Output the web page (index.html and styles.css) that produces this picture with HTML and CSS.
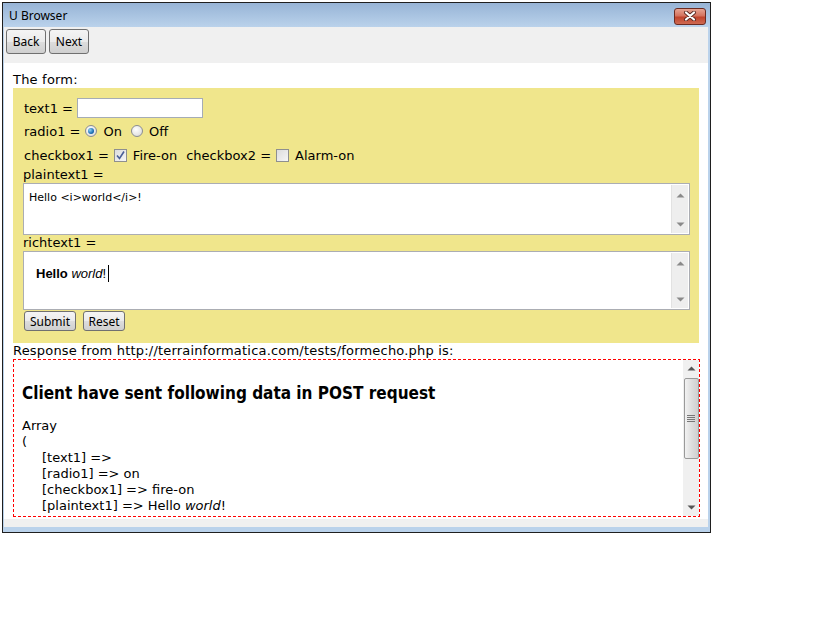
FILE: index.html
```html
<!DOCTYPE html>
<html lang="en">
<head>
<meta charset="UTF-8">
<title>U Browser</title>
<link rel="stylesheet" href="styles.css">
</head>
<body>
<div class="window">
    <div class="titlebar">
        <span class="title">U Browser</span>
        <div class="close">
            <svg width="14" height="10" viewBox="0 0 14 10">
                <path d="M3 1.5 L11 8.5 M11 1.5 L3 8.5" stroke="#5a2a24" stroke-width="4" stroke-linecap="round"/>
                <path d="M3 1.5 L11 8.5 M11 1.5 L3 8.5" stroke="#fff" stroke-width="2.2" stroke-linecap="round"/>
            </svg>
        </div>
    </div>
    <div class="client">
        <div class="toolbar">
            <button class="tool-btn">Back</button>
            <button class="tool-btn">Next</button>
        </div>
        <div class="content">
            <div class="line">The form:</div>
            <div class="form-box">
                <div class="row row-text">
                    <span>text1 =</span>
                    <span class="text-input"></span>
                </div>
                <div class="row row-radio">
                    <span>radio1 =</span>
                    <span class="radio checked"></span>
                    <span>On</span>
                    <span class="radio second"></span>
                    <span>Off</span>
                </div>
                <div class="row row-check">
                    <span>checkbox1 =</span>
                    <span class="checkbox">
                        <svg width="11" height="11" viewBox="0 0 11 11"><path d="M2 5.5 L4.5 8.5 L9 1.5" stroke="#4a5f97" stroke-width="1.6" fill="none"/></svg>
                    </span>
                    <span>Fire-on</span>
                    <span class="gap">checkbox2 =</span>
                    <span class="checkbox"></span>
                    <span>Alarm-on</span>
                </div>
                <div class="label">plaintext1 =</div>
                <div class="area plain">
                    <div class="area-text">Hello &lt;i&gt;world&lt;/i&gt;!</div>
                    <div class="mini-scroll">
                        <svg width="9" height="5" viewBox="0 0 9 5"><path d="M0.5 4.5 L4.5 0.5 L8.5 4.5 Z" fill="#8a8a8a"/></svg>
                        <svg width="9" height="5" viewBox="0 0 9 5"><path d="M0.5 0.5 L4.5 4.5 L8.5 0.5 Z" fill="#8a8a8a"/></svg>
                    </div>
                </div>
                <div class="label">richtext1 =</div>
                <div class="area rich">
                    <div class="area-text"><b>Hello</b> <i>world</i>!<span class="caret"></span></div>
                    <div class="mini-scroll">
                        <svg width="9" height="5" viewBox="0 0 9 5"><path d="M0.5 4.5 L4.5 0.5 L8.5 4.5 Z" fill="#8a8a8a"/></svg>
                        <svg width="9" height="5" viewBox="0 0 9 5"><path d="M0.5 0.5 L4.5 4.5 L8.5 0.5 Z" fill="#8a8a8a"/></svg>
                    </div>
                </div>
                <div class="form-buttons">
                    <button class="form-btn submit">Submit</button>
                    <button class="form-btn reset">Reset</button>
                </div>
            </div>
            <div class="line">Response from http://terrainformatica.com/tests/formecho.php is:</div>
            <div class="response">
                <div class="response-body">
                    <h3>Client have sent following data in POST request</h3>
                    <div class="out">Array</div>
                    <div class="out">(</div>
                    <div class="out indent">[text1] =&gt;</div>
                    <div class="out indent">[radio1] =&gt; on</div>
                    <div class="out indent">[checkbox1] =&gt; fire-on</div>
                    <div class="out indent">[plaintext1] =&gt; Hello <i>world</i>!</div>
                </div>
                <div class="scrollbar">
                    <svg class="arrow" width="9" height="5" viewBox="0 0 9 5"><path d="M0.5 4.5 L4.5 0.5 L8.5 4.5 Z" fill="#555"/></svg>
                    <div class="thumb">
                        <svg width="8" height="7" viewBox="0 0 8 7"><path d="M0 0.5 H8 M0 2.5 H8 M0 4.5 H8 M0 6.5 H8" stroke="#777" stroke-width="1"/></svg>
                    </div>
                    <div class="track"></div>
                    <svg class="arrow" width="9" height="5" viewBox="0 0 9 5"><path d="M0.5 0.5 L4.5 4.5 L8.5 0.5 Z" fill="#555"/></svg>
                </div>
            </div>
        </div>
        <div class="statusbar"></div>
    </div>
</div>
</body>
</html>
```

FILE: styles.css
```css
body, html {
    margin: 0;
    background: #fff;
}
.window {
    box-sizing: border-box;
    width: 709px;
    height: 531px;
    margin: 2px 0 0 2px;
    border: 1px solid #1f1f1f;
    background: linear-gradient(to bottom, #97b4d6 0, #bad2eb 24px, #bad2eb 100%);
    padding: 0 2px 5px 1px;
    display: flex;
    flex-direction: column;
}
.titlebar {
    height: 24px;
    display: flex;
    align-items: center;
    justify-content: space-between;
    padding: 0 2px 0 5px;
}
.title {
    font-family: "Noto Sans", sans-serif;
    font-size: 12px;
    color: #000;
}
.close {
    width: 30px;
    height: 15px;
    margin-top: 2px;
    border: 1px solid #6b2b22;
    border-radius: 3px;
    background: linear-gradient(to bottom, #e7a493 0, #d4735f 45%, #c0442d 55%, #cf6a52 100%);
    display: flex;
    align-items: center;
    justify-content: center;
}
.client {
    flex: 1;
    display: flex;
    flex-direction: column;
    background: #fff;
}
.toolbar {
    height: 36px;
    box-sizing: border-box;
    background: #f0f0f0;
    padding: 2px 0 0 2px;
    display: flex;
    align-items: flex-start;
    gap: 3px;
}
.tool-btn, .form-btn {
    font-family: "Noto Sans", sans-serif;
    font-size: 12px;
    color: #000;
    border: 1px solid #707070;
    border-radius: 3px;
    background: linear-gradient(to bottom, #f4f4f4 0, #ebebeb 50%, #dddddd 51%, #cfcfcf 100%);
    padding: 0;
    margin: 0;
}
.tool-btn {
    width: 40px;
    height: 25px;
}
.content {
    flex: 1;
    padding: 9px 9px 0 9px;
    font-family: "DejaVu Sans", sans-serif;
    font-size: 13px;
    letter-spacing: 0.2px;
    color: #000;
}
.line {
    height: 16px;
    line-height: 16px;
    white-space: nowrap;
}
.form-box {
    background: #f0e68c;
    padding: 10px 9px 12px 10px;
    letter-spacing: 0;
}
.row {
    display: flex;
    align-items: center;
    padding-left: 1px;
    white-space: nowrap;
}
.row-text {
    height: 20px;
    margin-bottom: 4px;
}
.row-radio {
    height: 18px;
    margin-bottom: 6px;
}
.row-check {
    height: 18px;
    margin-bottom: 3px;
}
.text-input {
    display: inline-block;
    box-sizing: border-box;
    width: 126px;
    height: 20px;
    background: #fff;
    border: 1px solid #a5acb5;
    margin-left: 4px;
}
.radio {
    display: inline-block;
    box-sizing: border-box;
    width: 12px;
    height: 12px;
    border-radius: 50%;
    border: 1px solid #8a8d92;
    background: radial-gradient(circle at 40% 35%, #ffffff 0, #e6e6e6 60%, #cfcfcf 100%);
    margin: 0 6px 0 5px;
    position: relative;
}
.radio.second {
    margin-left: 9px;
}
.radio.checked::after {
    content: "";
    position: absolute;
    left: 2px;
    top: 2px;
    width: 6px;
    height: 6px;
    border-radius: 50%;
    background: radial-gradient(circle at 35% 35%, #8fd2f5 0, #1c6fb4 60%, #124c7f 100%);
}
.checkbox {
    display: inline-flex;
    align-items: center;
    justify-content: center;
    box-sizing: border-box;
    width: 13px;
    height: 13px;
    border: 1px solid #8e8f8f;
    background: linear-gradient(135deg, #dcdcdc 0, #f6f6f6 100%);
    margin: 0 6px 0 5px;
}
.gap {
    margin-left: 9px;
}
.label {
    height: 16px;
    line-height: 16px;
}
.area {
    box-sizing: border-box;
    border: 1px solid #abadb3;
    background: #fff;
    display: flex;
}
.area.plain {
    height: 52px;
}
.area.rich {
    height: 59px;
}
.area-text {
    flex: 1;
}
.plain .area-text {
    font-size: 11px;
    padding: 7px 0 0 5px;
    line-height: 14px;
}
.rich .area-text {
    font-family: "Liberation Sans", sans-serif;
    font-size: 13px;
    padding: 13px 0 0 12px;
    line-height: 16px;
}
.caret {
    display: inline-block;
    width: 1px;
    height: 17px;
    background: #000;
    vertical-align: -4px;
    margin-left: 2px;
}
.mini-scroll {
    width: 16px;
    margin: 1px;
    background: #eeeeee;
    border-left: 1px solid #e2e2e2;
    display: flex;
    flex-direction: column;
    align-items: center;
    justify-content: space-between;
    padding: 8px 0 6px;
}
.form-buttons {
    display: flex;
    gap: 7px;
    margin-top: 1px;
    padding-left: 1px;
}
.form-btn {
    height: 20px;
}
.submit {
    width: 52px;
}
.reset {
    width: 42px;
}
.response {
    box-sizing: border-box;
    height: 158px;
    margin-right: -1px;
    padding: 1px;
    background:
        repeating-linear-gradient(to right, #f00 0, #f00 3px, transparent 3px, transparent 5px) top left / 100% 1px no-repeat,
        repeating-linear-gradient(to right, #f00 0, #f00 3px, transparent 3px, transparent 5px) bottom left / 100% 1px no-repeat,
        repeating-linear-gradient(to bottom, #f00 0, #f00 3px, transparent 3px, transparent 5px) top left / 1px 100% no-repeat,
        repeating-linear-gradient(to bottom, #f00 0, #f00 3px, transparent 3px, transparent 5px) top right / 1px 100% no-repeat;
    display: flex;
    letter-spacing: 0;
}
.response-body {
    flex: 1;
    padding: 0 8px;
    overflow: hidden;
}
.response-body h3 {
    font-family: "DejaVu Sans Condensed", "DejaVu Sans", sans-serif;
    font-size: 17px;
    line-height: 20px;
    margin: 23px 0 15px;
}
.out {
    height: 16px;
    line-height: 16px;
    white-space: nowrap;
}
.indent {
    padding-left: 20px;
}
.scrollbar {
    width: 16px;
    background: #f0f0f0;
    display: flex;
    flex-direction: column;
    align-items: center;
}
.arrow {
    margin: 6px 0;
}
.thumb {
    box-sizing: border-box;
    width: 15px;
    height: 81px;
    margin-top: 1px;
    border: 1px solid #9a9a9a;
    border-radius: 2px;
    background: linear-gradient(to right, #f2f2f2 0, #dedede 50%, #cfcfcf 100%);
    display: flex;
    align-items: center;
    justify-content: center;
}
.track {
    flex: 1;
}
.statusbar {
    height: 8px;
    background: #f0f0f0;
}
```
